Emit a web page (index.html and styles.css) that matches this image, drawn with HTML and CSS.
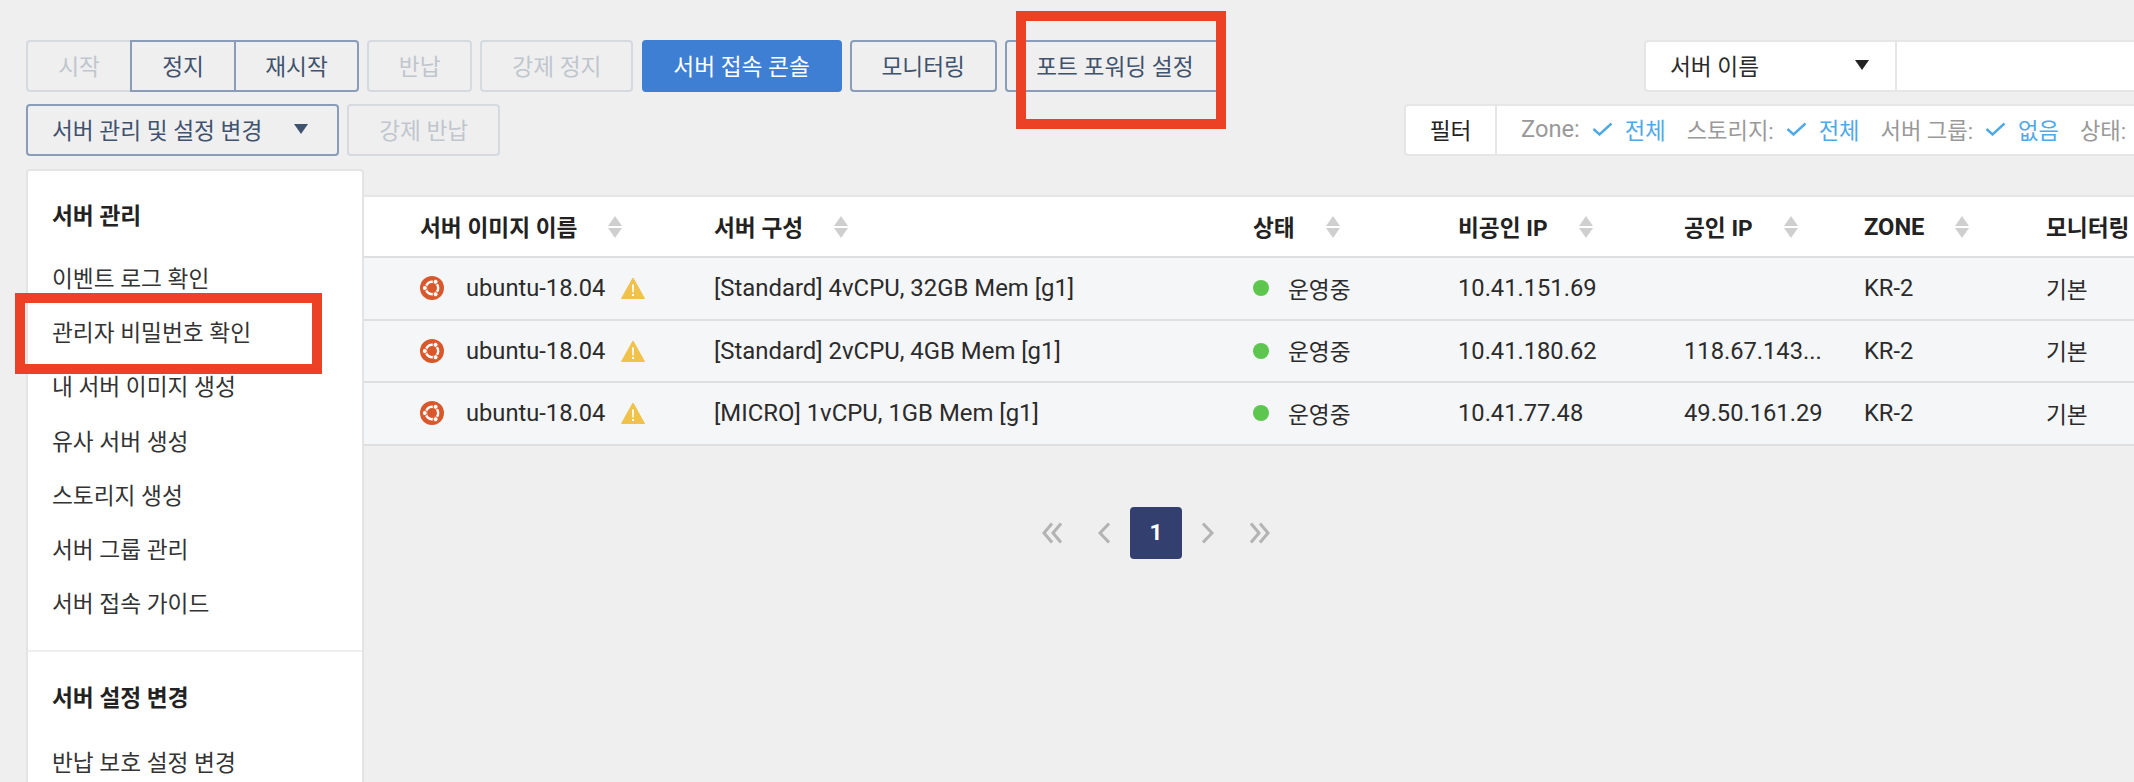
FILE: index.html
```html
<!DOCTYPE html>
<html lang="ko">
<head>
<meta charset="utf-8">
<title>서버</title>
<link rel="stylesheet" href="styles.css">
</head>
<body>
<div class="page">
  <div class="toolbar">
    <div class="actions">
      <div class="action-row">
        <div class="btn-group">
          <button class="btn off w-start">시작</button><button class="btn on w-stop">정지</button><button class="btn on w-restart">재시작</button>
        </div>
        <button class="btn off w-return">반납</button>
        <button class="btn off w-force">강제 정지</button>
        <button class="btn primary w-console">서버 접속 콘솔</button>
        <button class="btn on w-monitor">모니터링</button>
        <button class="btn on w-port">포트 포워딩 설정</button>
      </div>
      <div class="action-row">
        <button class="btn on w-manage">서버 관리 및 설정 변경<span class="caret caret-navy"></span></button>
        <button class="btn off w-force">강제 반납</button>
      </div>
    </div>
    <div class="search-side">
      <div class="search">
        <div class="search-select">서버 이름<span class="caret caret-dark"></span></div>
        <div class="search-input"></div>
      </div>
      <div class="filter">
        <div class="filter-title">필터</div>
        <div class="filter-items">
          <span class="f-label lat">Zone:</span><svg class="check" viewBox="0 0 21 14"><path d="M1.5 7l6 5.5L19.5 1.5"/></svg><span class="f-value">전체</span>
          <span class="f-label f-gap">스토리지:</span><svg class="check" viewBox="0 0 21 14"><path d="M1.5 7l6 5.5L19.5 1.5"/></svg><span class="f-value">전체</span>
          <span class="f-label f-gap">서버 그룹:</span><svg class="check" viewBox="0 0 21 14"><path d="M1.5 7l6 5.5L19.5 1.5"/></svg><span class="f-value">없음</span>
          <span class="f-label f-gap">상태:</span>
        </div>
      </div>
    </div>
  </div>

  <div class="main">
    <div class="menu">
      <div class="menu-section">
        <div class="menu-title">서버 관리</div>
        <div class="menu-item">이벤트 로그 확인</div>
        <div class="menu-item">관리자 비밀번호 확인</div>
        <div class="menu-item">내 서버 이미지 생성</div>
        <div class="menu-item">유사 서버 생성</div>
        <div class="menu-item">스토리지 생성</div>
        <div class="menu-item">서버 그룹 관리</div>
        <div class="menu-item">서버 접속 가이드</div>
      </div>
      <div class="menu-section second">
        <div class="menu-title">서버 설정 변경</div>
        <div class="menu-item">반납 보호 설정 변경</div>
      </div>
    </div>

    <div class="content">
      <div class="table">
        <div class="tr head">
          <div class="td c-name">서버 이미지 이름<span class="sort"></span></div>
          <div class="td c-spec">서버 구성<span class="sort"></span></div>
          <div class="td c-state">상태<span class="sort"></span></div>
          <div class="td c-priv">비공인 IP<span class="sort"></span></div>
          <div class="td c-pub">공인 IP<span class="sort"></span></div>
          <div class="td c-zone"><span class="lat">ZONE</span><span class="sort"></span></div>
          <div class="td c-mon">모니터링</div>
        </div>
        <div class="tr">
          <div class="td c-name"><svg class="ubuntu" viewBox="0 0 24 24"><circle cx="12" cy="12" r="12" fill="#d9582b"/><circle cx="12" cy="12" r="6.2" fill="none" stroke="#fff" stroke-width="2.4"/><circle cx="4.8" cy="12" r="2.5" fill="#fff" stroke="#d9582b"/><circle cx="15.6" cy="5.8" r="2.5" fill="#fff" stroke="#d9582b"/><circle cx="15.6" cy="18.2" r="2.5" fill="#fff" stroke="#d9582b"/></svg><span class="img-name lat">ubuntu-18.04</span><svg class="warn" viewBox="0 0 24 22"><path d="M12 1L23.5 21.5H.5z" fill="#f0c24b" stroke="#f0c24b" stroke-linejoin="round"/><path d="M11 7.5h2l-.3 8h-1.4zM11 17h2v2h-2z" fill="#fff"/></svg></div>
          <div class="td c-spec lat">[Standard] 4vCPU, 32GB Mem [g1]</div>
          <div class="td c-state"><span class="dot"></span>운영중</div>
          <div class="td c-priv lat">10.41.151.69</div>
          <div class="td c-pub lat"></div>
          <div class="td c-zone lat">KR-2</div>
          <div class="td c-mon">기본</div>
        </div>
        <div class="tr">
          <div class="td c-name"><svg class="ubuntu" viewBox="0 0 24 24"><circle cx="12" cy="12" r="12" fill="#d9582b"/><circle cx="12" cy="12" r="6.2" fill="none" stroke="#fff" stroke-width="2.4"/><circle cx="4.8" cy="12" r="2.5" fill="#fff" stroke="#d9582b"/><circle cx="15.6" cy="5.8" r="2.5" fill="#fff" stroke="#d9582b"/><circle cx="15.6" cy="18.2" r="2.5" fill="#fff" stroke="#d9582b"/></svg><span class="img-name lat">ubuntu-18.04</span><svg class="warn" viewBox="0 0 24 22"><path d="M12 1L23.5 21.5H.5z" fill="#f0c24b" stroke="#f0c24b" stroke-linejoin="round"/><path d="M11 7.5h2l-.3 8h-1.4zM11 17h2v2h-2z" fill="#fff"/></svg></div>
          <div class="td c-spec lat">[Standard] 2vCPU, 4GB Mem [g1]</div>
          <div class="td c-state"><span class="dot"></span>운영중</div>
          <div class="td c-priv lat">10.41.180.62</div>
          <div class="td c-pub lat">118.67.143...</div>
          <div class="td c-zone lat">KR-2</div>
          <div class="td c-mon">기본</div>
        </div>
        <div class="tr">
          <div class="td c-name"><svg class="ubuntu" viewBox="0 0 24 24"><circle cx="12" cy="12" r="12" fill="#d9582b"/><circle cx="12" cy="12" r="6.2" fill="none" stroke="#fff" stroke-width="2.4"/><circle cx="4.8" cy="12" r="2.5" fill="#fff" stroke="#d9582b"/><circle cx="15.6" cy="5.8" r="2.5" fill="#fff" stroke="#d9582b"/><circle cx="15.6" cy="18.2" r="2.5" fill="#fff" stroke="#d9582b"/></svg><span class="img-name lat">ubuntu-18.04</span><svg class="warn" viewBox="0 0 24 22"><path d="M12 1L23.5 21.5H.5z" fill="#f0c24b" stroke="#f0c24b" stroke-linejoin="round"/><path d="M11 7.5h2l-.3 8h-1.4zM11 17h2v2h-2z" fill="#fff"/></svg></div>
          <div class="td c-spec lat">[MICRO] 1vCPU, 1GB Mem [g1]</div>
          <div class="td c-state"><span class="dot"></span>운영중</div>
          <div class="td c-priv lat">10.41.77.48</div>
          <div class="td c-pub lat">49.50.161.29</div>
          <div class="td c-zone lat">KR-2</div>
          <div class="td c-mon">기본</div>
        </div>
      </div>
      <div class="pager">
        <svg class="pg pg-double" viewBox="0 0 20 22"><path d="M10 1.5L2 11l8 9.5M19 1.5L11 11l8 9.5"/></svg>
        <svg class="pg pg-single" viewBox="0 0 12 22"><path d="M11 1.5L2 11l9 9.5"/></svg>
        <div class="pg-current">1</div>
        <svg class="pg pg-single" viewBox="0 0 12 22"><path d="M1 1.5L10 11l-9 9.5"/></svg>
        <svg class="pg pg-double" viewBox="0 0 20 22"><path d="M1 1.5L9 11l-8 9.5M10 1.5L18 11l-8 9.5"/></svg>
      </div>
    </div>
  </div>
</div>
<div class="mark mark-port"></div>
<div class="mark mark-pass"></div>
</body>
</html>
```
FILE: styles.css
```css
* { box-sizing: border-box; }
html, body { margin: 0; height: 782px; overflow: hidden; }
body {
  background: #efefef;
  color: #2b2b2b;
  font-family: Roboto, "Noto Sans CJK KR", sans-serif;
  font-size: 22.7px;
  position: relative;
}
.lat { font-size: 23.7px; }
.c-spec.lat { font-size: 23.9px; }
.page { width: 2134px; height: 782px; padding-top: 40px; overflow: hidden; }

.toolbar { display: flex; justify-content: space-between; padding-left: 26px; height: 116px; }
.actions { display: flex; flex-direction: column; gap: 12px; }
.action-row { display: flex; gap: 8.2px; height: 52px; }
.btn-group { display: flex; }
.btn {
  height: 52px; padding: 0 0 2px; border: 2px solid; border-radius: 4px;
  background: transparent; font: inherit; white-space: nowrap;
}
.btn.off { border-color: #d5dae1; color: #c0c6ce; }
.btn.on { border-color: #8a9db8; color: #3f536e; }
.btn.primary { border-color: #3e7ed3; background: #3e7ed3; color: #fff; }
.btn-group .btn { border-radius: 0; }
.btn-group .btn:first-child { border-radius: 4px 0 0 4px; border-right: 0; }
.btn-group .btn:nth-child(2) { border-right: 0; }
.btn-group .btn:last-child { border-radius: 0 4px 4px 0; }
.w-start { width: 104px; }
.w-stop { width: 104px; }
.w-restart { width: 125px; }
.w-return { width: 105px; }
.w-force { width: 153px; }
.w-console { width: 200px; }
.w-monitor { width: 147px; }
.w-port { width: 220px; }
.w-manage { width: 313px; display: flex; align-items: center; padding-left: 24px; }
.caret { display: inline-block; width: 0; height: 0; border-left: 7px solid transparent; border-right: 7px solid transparent; border-top: 10px solid; }
.caret-navy { color: #3f536e; margin-left: 32px; }
.caret-dark { color: #222; margin-left: auto; }

.search-side { width: 730px; display: flex; flex-direction: column; gap: 12px; align-items: flex-end; }
.search { width: 490px; height: 52px; display: flex; background: #fff; border: 2px solid #e6e6e6; border-right: 0; border-radius: 4px 0 0 4px; }
.search-select { width: 251px; display: flex; align-items: center; padding: 0 26px 2px 24px; border-right: 2px solid #e6e6e6; color: #2b2b2b; }
.search-input { flex: 1; }
.filter { width: 730px; height: 52px; display: flex; background: #fff; border: 2px solid #e6e6e6; border-right: 0; border-radius: 4px 0 0 4px; }
.filter-title { width: 91px; display: flex; align-items: center; justify-content: center; border-right: 2px solid #e6e6e6; color: #222; padding-bottom: 2px; }
.filter-items { flex: 1; display: flex; align-items: center; padding: 0 0 2px 24px; white-space: nowrap; overflow: hidden; font-size: 22.2px; }
.f-label { color: #999; }
.f-gap { margin-left: 21px; }
.f-value { color: #4fa9e6; }
.check { width: 21px; height: 14px; margin: 0 12px 0 12px; fill: none; stroke: #4fa9e6; stroke-width: 2.4; flex: none; }

.main { display: flex; margin-top: 13px; align-items: flex-start; }
.menu {
  width: 338px; height: 640px; margin-left: 26px; background: #fff; flex: none;
  border: 2px solid #e4e4e4; border-bottom: 0; border-radius: 4px 4px 0 0;
}
.menu-section { padding: 30px 24px 18px; }
.menu-section.second { border-top: 2px solid #efefef; padding-top: 31px; }
.menu-title { font-weight: 700; line-height: 32px; margin-bottom: 20px; color: #222; }
.second .menu-title { margin-bottom: 22px; }
.menu-item { line-height: 54.2px; height: 54.2px; color: #333; }

.content { flex: 1; min-width: 0; padding-top: 26px; }
.table { border-top: 2px solid #e6e6e6; }
.tr { display: flex; height: 62.5px; align-items: center; background: #f5f6f8; border-bottom: 2px solid #dfdfdf; }
.tr.head { height: 61px; background: #fff; font-weight: 700; color: #222; }
.td { display: flex; align-items: center; white-space: nowrap; flex: none; }
.c-name { width: 350px; padding-left: 56px; }
.c-spec { width: 539px; }
.c-state { width: 205px; }
.c-priv { width: 226px; }
.c-pub { width: 180px; }
.c-zone { width: 182px; }
.c-mon { flex: 1; }
.sort { display: inline-block; flex: none; width: 14px; height: 22px; margin-left: 31px; position: relative; }
.sort::before, .sort::after { content: ""; position: absolute; left: 0; width: 0; height: 0; border-left: 7px solid transparent; border-right: 7px solid transparent; }
.sort::before { top: 0; border-bottom: 10px solid #cfcfcf; }
.sort::after { bottom: 0; border-top: 10px solid #cfcfcf; }

.ubuntu { width: 24px; height: 24px; flex: none; }
.img-name { margin-left: 22px; }
.warn { width: 24px; height: 22px; margin-left: 16px; flex: none; }
.dot { width: 16px; height: 16px; border-radius: 50%; background: #5cc64f; margin-right: 19px; flex: none; }

.pager { display: flex; align-items: center; margin-top: 61px; padding-left: 678px; height: 52px; }
.pg { height: 22px; fill: none; stroke: #b3b3b3; stroke-width: 3; flex: none; }
.pg-double { width: 20px; }
.pg-single { width: 12px; margin: 0 20px 0 36px; }
.pg-current + .pg-single { margin: 0 36px 0 20px; }
.pg-current { width: 52px; height: 52px; background: #33406f; color: #fff; font-weight: 700; border-radius: 4px; display: flex; align-items: center; justify-content: center; }

.mark { position: absolute; z-index: 2; border: 10px solid #ec4125; }
.mark-port { left: 1016px; top: 11px; width: 210px; height: 118px; }
.mark-pass { left: 15px; top: 293px; width: 307px; height: 81px; }
```
